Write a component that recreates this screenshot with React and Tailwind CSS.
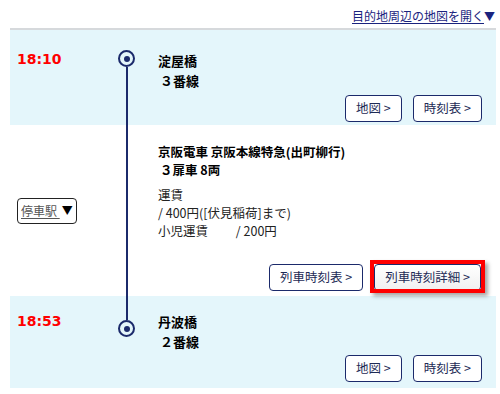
import React from "react";

const NAVY = "border-[#1b2a6b]";

function Btn({ children, className = "" }) {
  return (
    <div
      className={`h-[27px] px-[10px] flex items-center border ${NAVY} rounded-[4px] bg-white text-[12.5px] text-[#1d2a55] whitespace-nowrap ${className}`}
    >
      {children}
    </div>
  );
}

function Circle() {
  return (
    <div className="w-[17px] h-[17px] rounded-full border-[2.5px] border-[#1b2a6b] flex items-center justify-center shrink-0">
      <div className="w-[6px] h-[6px] rounded-full bg-[#1b2a6b]" />
    </div>
  );
}

export default function App() {
  return (
    <div
      className="w-[500px] h-[394px] bg-white overflow-hidden"
      style={{ fontFamily: '"Noto Sans CJK JP", "Noto Sans", sans-serif' }}
    >
      {/* top link */}
      <div className="h-[28px] flex items-start justify-end pr-[5px] pt-[7px]">
        <span className="text-[12px] leading-[18px] text-[#1a237e] underline underline-offset-[2px]">
          目的地周辺の地図を開く
        </span>
        <span className="text-[11px] leading-[18px] text-[#1a237e]">▼</span>
      </div>

      <div className="ml-[10px] mr-[4px] border-t-2 border-[#d6d9dc]">
        {/* section 1 */}
        <div className="h-[95px] bg-[#e4f6fb] flex">
          <div className="w-[108px] pl-[7px] pt-[20px]">
            <div
              className="text-[14px] font-bold text-[#ff0000] leading-[18px]"
              style={{ fontFamily: '"DejaVu Sans", Verdana, sans-serif' }}
            >
              18:10
            </div>
          </div>
          <div className="w-[17px] flex flex-col items-center pt-[20px]">
            <Circle />
            <div className="w-[2px] flex-1 bg-[#1b2a6b]" />
          </div>
          <div className="flex-1 flex flex-col pl-[23px] pr-[14px]">
            <div className="pt-[21px] text-[13px] font-bold text-black leading-[20px]">
              <div>淀屋橋</div>
              <div className="pl-[2px]">３番線</div>
            </div>
            <div className="mt-auto mb-[3px] flex justify-end gap-[11px]">
              <Btn>地図 &gt;</Btn>
              <Btn>時刻表 &gt;</Btn>
            </div>
          </div>
        </div>

        {/* section 2 */}
        <div className="h-[171px] bg-white flex">
          <div className="w-[108px] flex items-center pl-[7px]">
            <div className="h-[26px] px-[3px] flex items-center border border-[#222] rounded-[4px] text-[12px] bg-white">
              <span className="underline text-[#555] underline-offset-[2px] whitespace-pre">停車駅 </span>
              <span className="ml-[2px] text-[11px] text-black">▼</span>
            </div>
          </div>
          <div className="w-[17px] flex justify-center">
            <div className="w-[2px] h-full bg-[#1b2a6b]" />
          </div>
          <div className="flex-1 flex flex-col pl-[23px] pr-[15px]">
            <div className="pt-[18px] text-[12.5px] font-bold text-black leading-[18px]">
              <div>京阪電車 京阪本線特急(出町柳行)</div>
              <div className="pl-[2px]">３扉車 8両</div>
            </div>
            <div className="pt-[7px] text-[12.5px] text-[#222] leading-[18px]">
              <div>運賃</div>
              <div>/ 400円([伏見稲荷]まで)</div>
              <div className="whitespace-pre">小児運賃　　 / 200円</div>
            </div>
            <div className="mt-auto mb-[5px] flex justify-end gap-[11px]">
              <Btn>列車時刻表 &gt;</Btn>
              <div className="relative">
                <Btn className="bg-gradient-to-b from-white to-[#f0f0f0]">列車時刻詳細 &gt;</Btn>
                <div className="absolute -left-[4px] -top-[4px] -right-[4px] -bottom-[2px] border-[4px] border-[#ff0000] shadow-[3px_3px_4px_rgba(0,0,0,0.35)] pointer-events-none" />
              </div>
            </div>
          </div>
        </div>

        {/* section 3 */}
        <div className="h-[92px] bg-[#e4f6fb] flex">
          <div className="w-[108px] pl-[7px] pt-[16px]">
            <div
              className="text-[14px] font-bold text-[#ff0000] leading-[18px]"
              style={{ fontFamily: '"DejaVu Sans", Verdana, sans-serif' }}
            >
              18:53
            </div>
          </div>
          <div className="w-[17px] flex flex-col items-center">
            <div className="w-[2px] h-[24px] bg-[#1b2a6b]" />
            <Circle />
          </div>
          <div className="flex-1 flex flex-col pl-[23px] pr-[14px]">
            <div className="pt-[16px] text-[13px] font-bold text-black leading-[20px]">
              <div>丹波橋</div>
              <div className="pl-[2px]">２番線</div>
            </div>
            <div className="mt-auto mb-[6px] flex justify-end gap-[11px]">
              <Btn>地図 &gt;</Btn>
              <Btn>時刻表 &gt;</Btn>
            </div>
          </div>
        </div>
      </div>
    </div>
  );
}
